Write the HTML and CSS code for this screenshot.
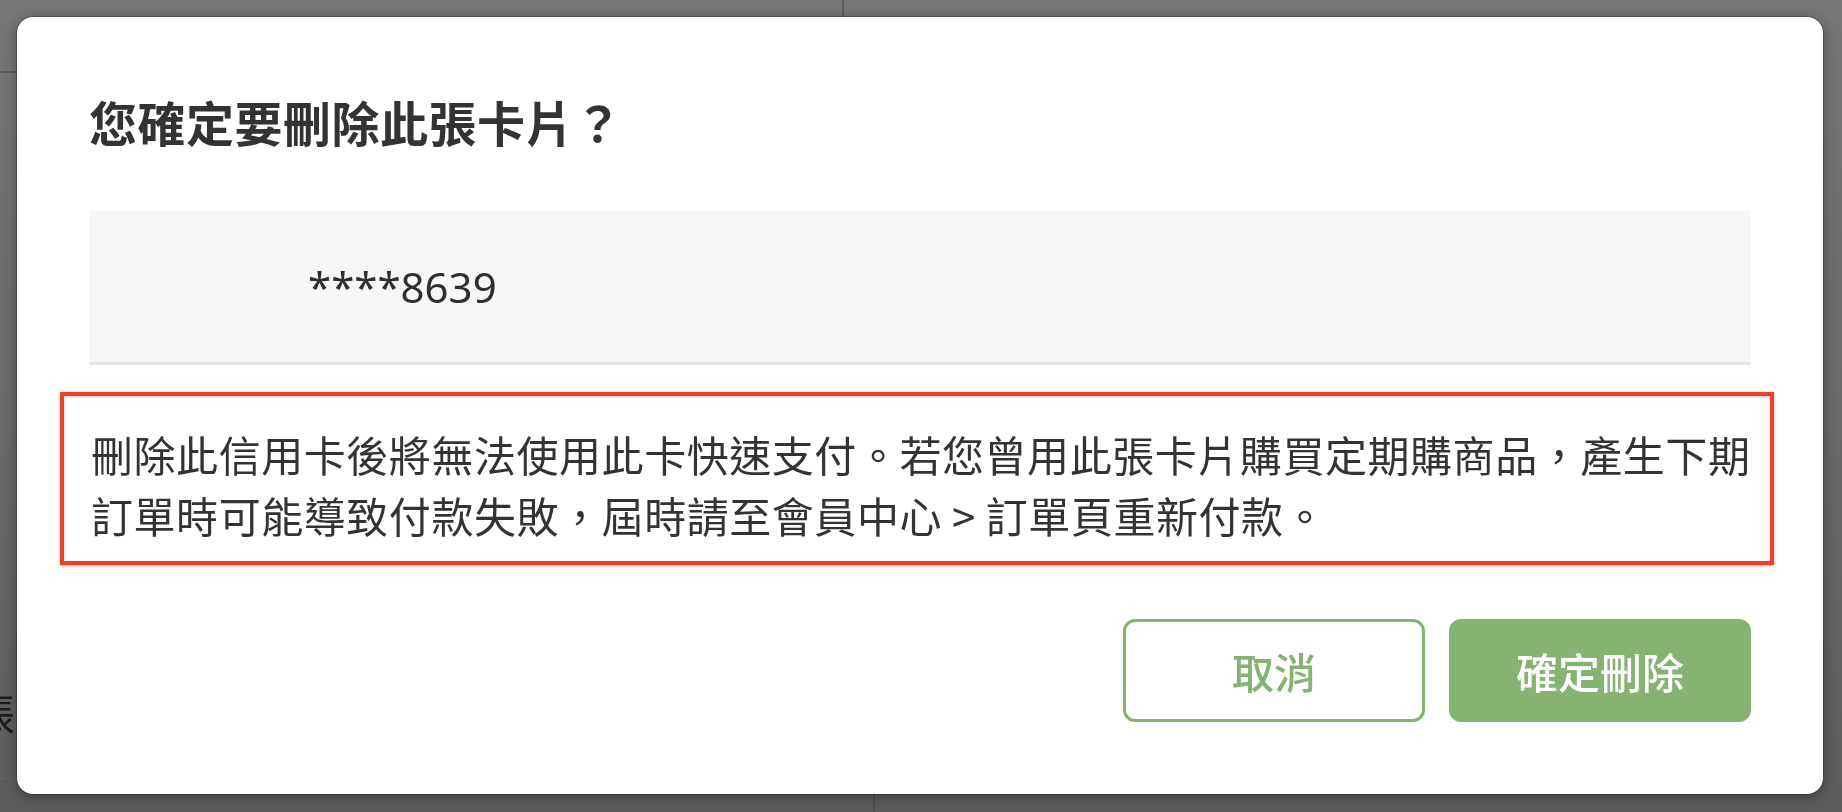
FILE: index.html
```html
<!DOCTYPE html>
<html lang="zh-Hant">
<head>
<meta charset="utf-8">
<title>刪除卡片</title>
<link rel="stylesheet" href="styles.css">
</head>
<body>
<div class="backdrop" aria-hidden="true">
  <span class="bg-line bg-line-v"></span>
  <span class="bg-line bg-line-h1"></span>
  <span class="bg-line bg-line-h2"></span>
  <span class="bg-line bg-line-v2"></span>
  <span class="bg-char">張</span>
</div>
<div class="overlay">
  <div class="modal">
    <h2 class="modal-title">您確定要刪除此張卡片？</h2>
    <div class="card-row">
      <span class="card-number">****8639</span>
    </div>
    <div class="notice">
      <p class="notice-text">刪除此信用卡後將無法使用此卡快速支付。若您曾用此張卡片購買定期購商品，產生下期訂單時可能導致付款失敗，屆時請至會員中心 &gt; 訂單頁重新付款。</p>
    </div>
    <div class="actions">
      <button class="btn btn-outline" type="button">取消</button>
      <button class="btn btn-solid" type="button">確定刪除</button>
    </div>
  </div>
</div>
</body>
</html>
```
FILE: styles.css
```css
html, body {
  margin: 0;
  padding: 0;
  width: 1842px;
  height: 812px;
  overflow: hidden;
}

body {
  background: #6c6c6c;
  font-family: "Noto Sans CJK TC", "Noto Sans", sans-serif;
  color: #333333;
}

.backdrop {
  position: fixed;
  inset: 0;
  background: linear-gradient(#777777, #6c6c6c 40%, #5c5c5c);
}

.bg-line {
  position: absolute;
  background: #5e5e5e;
}

.bg-line-v {
  left: 842px;
  top: 0;
  width: 2px;
  height: 20px;
}

.bg-line-v2 {
  left: 873px;
  top: 792px;
  width: 2px;
  height: 20px;
  background: #505050;
}

.bg-line-h1 {
  left: 0;
  top: 71px;
  width: 20px;
  height: 2px;
}

.bg-line-h2 {
  left: 0;
  top: 777px;
  width: 20px;
  height: 2px;
  background: #626262;
}

.bg-char {
  position: absolute;
  left: -27px;
  top: 684px;
  font-size: 42px;
  line-height: 56px;
  color: #1c1c1c;
}

.overlay {
  position: relative;
  padding: 17px 19px 18px 17px;
}

.modal {
  box-sizing: border-box;
  height: 777px;
  background: #ffffff;
  border-radius: 16px;
  padding: 70px 72px 72px 72px;
  box-shadow: 0 0 0 1px rgba(0, 0, 0, 0.22), 0 3px 14px rgba(0, 0, 0, 0.35);
  display: flex;
  flex-direction: column;
}

.modal-title {
  margin: 0;
  font-size: 48px;
  line-height: 68px;
  font-weight: 700;
  letter-spacing: 0.5px;
  color: #333333;
}

.card-row {
  margin-top: 56px;
  height: 151px;
  background: #f7f7f7;
  border-bottom: 3px solid #e2e2e2;
  display: flex;
  align-items: center;
  padding-left: 219px;
}

.card-number {
  font-family: "Noto Sans", "Noto Sans CJK TC", sans-serif;
  font-size: 42px;
  line-height: 56px;
  color: #2f2f2f;
}

.notice {
  margin: 27px -23px 0 -29px;
  border: 4px solid #e8442a;
  padding: 27px 14px 16px 27px;
  box-shadow: 0 1px 3px rgba(0, 0, 0, 0.35), inset 0 1px 3px rgba(0, 0, 0, 0.25);
}

.notice-text {
  margin: 0;
  font-size: 42px;
  line-height: 61px;
  letter-spacing: 0.55px;
  color: #333333;
}

.actions {
  margin-top: 54px;
  display: flex;
  justify-content: flex-end;
  gap: 24px;
}

.btn {
  box-sizing: border-box;
  width: 302px;
  height: 103px;
  border-radius: 12px;
  border: 3px solid #85b371;
  font-family: "Noto Sans CJK TC", "Noto Sans", sans-serif;
  font-size: 42px;
  font-weight: 500;
  display: flex;
  align-items: center;
  justify-content: center;
  padding: 0;
  cursor: pointer;
}

.btn-outline {
  background: #ffffff;
  color: #85b371;
}

.btn-solid {
  background: #85b371;
  color: #ffffff;
}
```
